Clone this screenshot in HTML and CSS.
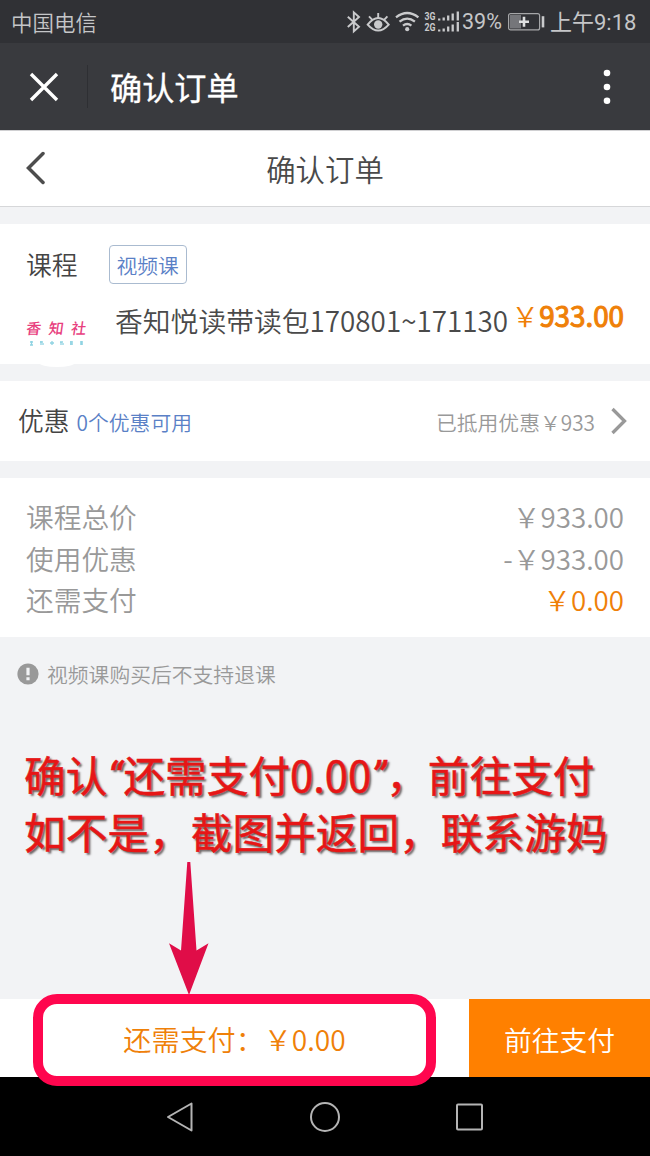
FILE: index.html
```
<!DOCTYPE html>
<html lang="zh-CN">
<head>
<meta charset="utf-8">
<title>确认订单</title>
<link rel="stylesheet" href="styles.css">
</head>
<body>
<div class="screen">
  <header class="status">
    <span class="carrier">中国电信</span>
    <div class="indicators">
      <svg class="status-icons" width="116" height="26" viewBox="0 0 116 26">
        <g fill="none" stroke="#c9cacc" stroke-width="1.9">
          <path d="M1.8 7.8 13 17.8 7.8 22.4V3.4l5.2 4.6L1.8 18"/>
          <path d="M21.7 15.6q10.5-13.4 21 0q-10.5 12-21 0z" stroke-width="2"/>
          <path d="M23 7.4l3.3 3.5M41.4 7.4l-3.3 3.5M32.2 4v5"/>
          <path d="M50 8.3q11.2-8.7 22.4 0M53.5 12.6q7.7-6 15.4 0M57 16.7q4.2-3.3 8.4 0" stroke-width="2.3"/>
        </g>
        <circle cx="32.2" cy="15.5" r="4.2" fill="#c9cacc"/>
        <circle cx="61.2" cy="20.2" r="2.1" fill="#c9cacc"/>
        <text x="78.5" y="11" class="net" textLength="11" lengthAdjust="spacingAndGlyphs">3G</text>
        <text x="78.5" y="22.4" class="net" textLength="11" lengthAdjust="spacingAndGlyphs">2G</text>
        <path stroke="#c9cacc" stroke-width="2.3" d="M93.2 9.500v2M97.700 8.500v3M102.200 6.500v5M106.700 4.500v7M111.800 2.500v9M93.200 20.500v2M97.700 19.500v3M102.200 17.500v5M106.700 15.500v7M111.800 13v9.500"/>
      </svg>
      <span class="percent">39%</span>
      <svg class="battery" width="38" height="20" viewBox="0 0 38 20">
        <rect x="1.6" y="1.6" width="31" height="16.3" rx="2" fill="none" stroke="#a5a6a8" stroke-width="1.2"/>
        <rect x="3" y="3" width="11" height="13.5" fill="#75767a"/>
        <path d="M12 9.8h10M17 4.8v10" stroke="#dedfe0" stroke-width="2.6"/>
        <path d="M36 4.2v11.2" stroke="#c9cacc" stroke-width="2.6"/>
      </svg>
      <span class="clock">上午9:18</span>
    </div>
  </header>

  <div class="appbar">
    <svg class="close" width="30" height="30" viewBox="0 0 30 30"><path d="M2 2 28 28M28 2 2 28" stroke="#fff" stroke-width="3.4"/></svg>
    <span class="divider"></span>
    <h1 class="app-title">确认订单</h1>
    <svg class="more" width="8" height="36" viewBox="0 0 8 36" fill="#fff"><circle cx="4" cy="4" r="3.3"/><circle cx="4" cy="18" r="3.3"/><circle cx="4" cy="31.8" r="3.3"/></svg>
  </div>

  <div class="page-head">
    <svg class="back" width="20" height="34" viewBox="0 0 20 34"><path d="M18 2.5 3.5 17 18 31.5" fill="none" stroke="#4d4d4d" stroke-width="3.5" stroke-linecap="round"/></svg>
    <h2 class="page-title">确认订单</h2>
  </div>

  <section class="card course">
    <div class="course-head"><span class="label">课程</span><span class="tag">视频课</span></div>
    <div class="course-item">
      <div class="logo">
        <div class="logo-name"><span>香</span><span>知</span><span>社</span></div>
        <svg class="logo-sub" width="56" height="5" viewBox="0 0 56 5"><path d="M1 1h3M2.5 0v4M1 4h3M11 1h3M12 0v4M14 2v2M21 2h4M23 0v4M31 1h3M32 1v3M34 2v2M41 1h3M42 0v4M41 3h3M51 1h3M52.5 0v4M51 3h3" stroke="#8fd3e2" stroke-width="1.3"/></svg>
      </div>
      <span class="item-name">香知悦读带读包170801~171130</span>
      <span class="item-price"><span>￥</span><span class="sum">933.00</span></span>
    </div>
  </section>

  <section class="card coupon">
    <span class="label">优惠</span>
    <span class="coupon-count">0个优惠可用</span>
    <span class="coupon-used">已抵用优惠￥933</span>
    <svg width="18" height="28" viewBox="0 0 18 28"><path d="M2.5 2 14.5 14 2.5 26" fill="none" stroke="#999" stroke-width="3.3"/></svg>
  </section>

  <section class="card totals">
    <div class="row"><span>课程总价</span><span>￥933.00</span></div>
    <div class="row"><span>使用优惠</span><span>-￥933.00</span></div>
    <div class="row"><span>还需支付</span><span class="due">￥0.00</span></div>
  </section>

  <div class="notice">
    <svg width="22" height="22" viewBox="0 0 22 22"><circle cx="11" cy="11" r="10.6" fill="#999"/><path d="M11 4.8v7.5M11 14.3v3" stroke="#f2f3f5" stroke-width="3.2"/></svg>
    <span>视频课购买后不支持退课</span>
  </div>

  <footer class="paybar">
    <div class="amount">还需支付：￥0.00</div>
    <div class="pay">前往支付</div>
  </footer>

  <nav class="sysnav">
    <svg width="30" height="32" viewBox="0 0 30 32"><path d="M3 16 26.5 2.5V29.5z"/></svg>
    <svg width="32" height="32" viewBox="0 0 32 32"><circle cx="16" cy="16" r="14"/></svg>
    <svg width="30" height="32" viewBox="0 0 30 32"><rect x="2" y="3.5" width="25" height="25" rx="1"/></svg>
  </nav>

  <div class="callout">
    <div class="line">确认<span class="quote open">“</span>还需支付0.00<span class="quote end">”</span>，前往支付</div>
    <div class="line">如不是，截图并返回，联系游妈</div>
  </div>
  <svg class="arrow" width="40" height="134" viewBox="0 0 40 134"><path d="M18.3 0h3L27.5 88.5 39.5 81.2 20 133 0 81.2 12 88.5z" fill="#e00d48"/></svg>
  <div class="highlight"></div>
</div>
</body>
</html>
```
FILE: styles.css
```
* { box-sizing: border-box; }
body {
  margin: 0;
  background: #f2f3f5;
  font-family: "Noto Sans CJK SC", sans-serif;
  font-weight: 350;
}
svg { display: block; flex: none; }
span, h1, h2 { white-space: nowrap; }
.screen {
  position: relative;
  display: flex;
  flex-direction: column;
  width: 650px;
  height: 1156px;
  overflow: hidden;
  background: #f2f3f5;
}

.status {
  display: flex;
  justify-content: space-between;
  height: 43px;
  padding: 0 14px 0 11px;
  background: #303135;
  color: #c5c6c8;
  font-size: 21.5px;
  line-height: 43px;
}
.indicators { display: flex; }
.status-icons { margin-top: 9px; }
.net { font: bold 10px Roboto, sans-serif; fill: #c9cacc; }
.percent {
  width: 40px;
  margin-right: 5px;
  font-family: Roboto, sans-serif;
  font-weight: 400;
  font-size: 21.5px;
}
.battery { margin: 12px 5px 0 0; }
.clock { width: 86px; font-family: Roboto, "Noto Sans CJK SC", sans-serif; font-size: 22px; font-weight: 400; line-height: 45px; }

.appbar {
  display: flex;
  align-items: center;
  height: 87px;
  padding: 0 39px 0 29px;
  background: #393a3e;
  color: #fff;
}
.divider { width: 1px; height: 43px; margin: 0 22px 0 28px; background: #2e2f33; }
.app-title {
  margin: 0 auto 0 0;
  font-size: 32.2px;
  font-weight: 400;
  line-height: 83px;
  -webkit-text-stroke: 0.3px #fff;
}

.page-head {
  display: grid;
  grid-template-columns: 200px 250px 200px;
  align-items: center;
  height: 77px;
  border-top: 1px solid #d0d0d2;
  border-bottom: 1px solid #d6d7d9;
  background: #fff;
}
.back { margin: 0 0 2px 25px; }
.page-title { margin: 0; text-align: center; color: #4a4a4a; font-size: 29.4px; font-weight: 350; line-height: 75px; }

.card { margin-top: 17px; background: #fff; }
.label { color: #444; font-size: 25.8px; }

.course { height: 140px; padding: 21px 26px 0; }
.course-head { display: flex; gap: 31px; height: 40px; line-height: 38px; }
.tag {
  width: 78px;
  height: 39px;
  border: 1px solid #aabbd0;
  border-radius: 4px;
  color: #5a80c6;
  font-size: 20.8px;
  text-align: center;
}
.course-item { display: flex; height: 79px; }
.logo {
  position: relative;
  width: 60px;
  margin-right: 29px;
  padding-top: 34px;
}
.logo::after {
  content: "";
  position: absolute;
  left: 13px;
  bottom: -3px;
  width: 36px;
  height: 9px;
  border-radius: 50%;
  background: #fff;
}
.logo-name {
  display: flex;
  justify-content: space-between;
  height: 22px;
  color: #e83f7e;
  font-size: 15px;
  font-weight: 500;
  line-height: 17px;
  transform: skewX(-8deg);
}
.logo-sub { margin-left: 3px; }
.item-name { color: #4a4a4a; font-size: 27.8px; line-height: 71px; }
.item-price { margin-left: auto; color: #ef8008; font-size: 27.8px; line-height: 61px; }
.sum { font-weight: 400; -webkit-text-stroke: 1.1px #ef8008; }

.coupon { display: flex; align-items: center; height: 80px; padding: 0 22px 0 18px; line-height: 78px; }
.coupon .label { line-height: 76px; margin-bottom: 2px; }
.coupon-count { margin: 2px 0 0 7px; color: #5a80c6; font-size: 20.8px; }
.coupon-used { margin: 2px 15px 0 auto; color: #999; font-size: 20.8px; }

.totals { height: 159px; padding: 18px 26px 0; color: #999; font-size: 27.7px; }
.row { display: flex; justify-content: space-between; height: 41.6px; line-height: 41.6px; }
.due { color: #ef8008; }

.notice { display: flex; align-items: center; gap: 8px; height: 74px; padding-left: 17px; color: #999; font-size: 20.8px; }

.paybar { display: flex; height: 78px; margin-top: auto; background: #fff; font-size: 27.8px; line-height: 80px; }
.amount { flex: 1; text-align: center; color: #ef8008; font-size: 28.1px; }
.pay { width: 181px; background: #ff8000; color: #fff; text-align: center; }

.sysnav { display: flex; justify-content: center; gap: 114px; height: 79px; padding-top: 24px; background: #000; }
.sysnav svg { fill: none; stroke: #b4b4b4; stroke-width: 2; stroke-linejoin: round; }

.callout {
  position: absolute;
  top: 746px;
  left: 24px;
  color: #e61616;
  font-size: 41.7px;
  font-weight: 400;
  white-space: nowrap;
  -webkit-text-stroke: 0.5px #e61616;
  text-shadow: 2px 2px 2px rgba(60, 50, 50, 0.75);
}
.line { height: 56.7px; line-height: 56.7px; }
.quote { display: inline-block; width: 16px; height: 40px; line-height: 40px; font-family: Roboto, sans-serif; font-style: italic; }
.end { width: 15px; }
.arrow { position: absolute; top: 862px; left: 169px; }
.highlight {
  position: absolute;
  top: 994px;
  left: 33px;
  width: 403px;
  height: 92px;
  border: 10px solid #ff064e;
  border-radius: 24px;
}
```
